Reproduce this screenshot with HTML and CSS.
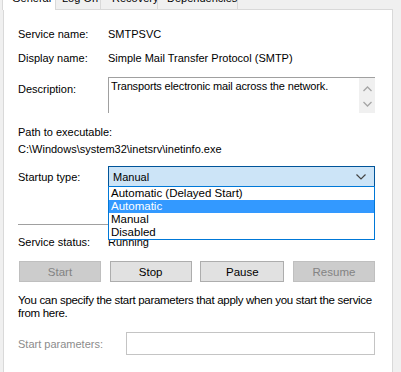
FILE: index.html
```html
<!DOCTYPE html>
<html lang="en">
<head>
    <meta charset="UTF-8">
    <title>SMTPSVC Properties</title>
    <link rel="stylesheet" href="styles.css">
</head>
<body>
    <div class="tabs">
        <div class="tab tab-general active">General</div>
        <div class="tab tab-logon">Log On</div>
        <div class="tab tab-recovery">Recovery</div>
        <div class="tab tab-deps">Dependencies</div>
    </div>
    <div class="panel">
        <div class="row row-first">
            <span class="label">Service name:</span>
            <span class="value">SMTPSVC</span>
        </div>
        <div class="row row-display">
            <span class="label">Display name:</span>
            <span class="value">Simple Mail Transfer Protocol (SMTP)</span>
        </div>
        <div class="row row-desc">
            <span class="label label-desc">Description:</span>
            <div class="desc-box">
                <div class="desc-text">Transports electronic mail across the network.</div>
                <div class="scrollbar">
                    <svg width="9" height="6" viewBox="0 0 9 6"><path d="M0.5 5 L4.5 1 L8.5 5" fill="none" stroke="#a6a6a6" stroke-width="1.3"/></svg>
                    <svg width="9" height="6" viewBox="0 0 9 6"><path d="M0.5 1 L4.5 5 L8.5 1" fill="none" stroke="#a6a6a6" stroke-width="1.3"/></svg>
                </div>
            </div>
        </div>
        <div class="path">
            <div>Path to executable:</div>
            <div>C:\Windows\system32\inetsrv\inetinfo.exe</div>
        </div>
        <div class="row row-startup">
            <span class="label">Startup type:</span>
            <div class="combo-wrap">
                <div class="combo">
                    <span>Manual</span>
                    <svg width="10" height="6" viewBox="0 0 10 6"><path d="M0.5 0.5 L5 5 L9.5 0.5" fill="none" stroke="#444" stroke-width="1.2"/></svg>
                </div>
                <div class="dropdown">
                    <div class="option">Automatic (Delayed Start)</div>
                    <div class="option selected">Automatic</div>
                    <div class="option">Manual</div>
                    <div class="option">Disabled</div>
                </div>
            </div>
        </div>
        <div class="separator"></div>
        <div class="row row-status">
            <span class="label">Service status:</span>
            <span class="value">Running</span>
        </div>
        <div class="buttons">
            <button class="btn" disabled>Start</button>
            <button class="btn">Stop</button>
            <button class="btn btn-wide">Pause</button>
            <button class="btn" disabled>Resume</button>
        </div>
        <p class="hint">You can specify the start parameters that apply when you start the service from here.</p>
        <div class="row row-params">
            <span class="label label-params">Start parameters:</span>
            <div class="params-input"></div>
        </div>
    </div>
</body>
</html>
```

FILE: styles.css
```css
body {
    margin: 0;
    width: 401px;
    height: 372px;
    overflow: hidden;
    background-color: #f0f0f0;
    font-family: "Liberation Sans", Arial, sans-serif;
    font-size: 11px;
    color: #000;
}
.tabs {
    display: flex;
    align-items: flex-end;
    margin-top: -12px;
    margin-left: 2px;
    height: 21px;
}
.tab {
    box-sizing: border-box;
    height: 20px;
    padding: 1px 0 0 8px;
    line-height: 14px;
    background-color: #f0f0f0;
    border: 1px solid #d9d9d9;
    border-bottom: none;
    margin-left: -1px;
}
.tab.active {
    height: 21px;
    margin-left: 0;
    background-color: #fff;
    position: relative;
    z-index: 1;
    margin-bottom: -1px;
    padding-left: 9px;
}
.tab-general { width: 54px; }
.tab-logon { width: 46px; padding-left: 6px; }
.tab-recovery { width: 58px; padding-left: 11px; }
.tab-deps { width: 81px; padding-left: 9px; }
.panel {
    box-sizing: border-box;
    margin-left: 3px;
    width: 390px;
    height: 380px;
    background-color: #fff;
    border: 1px solid #d9d9d9;
    padding: 17px 17px 0 14px;
}
.row {
    display: flex;
    line-height: 14px;
}
.label {
    width: 90px;
    flex-shrink: 0;
}
.row-display {
    margin-top: 10px;
}
.row-desc {
    margin-top: 12px;
    align-items: flex-start;
}
.label-desc {
    padding-top: 5px;
}
.desc-box {
    flex: 1;
    display: flex;
    height: 35px;
    border-top: 1px solid #a0a0a0;
    border-left: 1px solid #a0a0a0;
}
.desc-text {
    flex: 1;
    padding: 1px 0 0 2px;
    letter-spacing: -0.15px;
}
.scrollbar {
    width: 16px;
    background-color: #f0f0f0;
    display: flex;
    flex-direction: column;
    align-items: center;
    justify-content: space-around;
    padding: 4px 0 2px;
    box-sizing: border-box;
}
.path {
    margin-top: 11px;
    line-height: 17px;
}
.row-startup {
    margin-top: 8px;
    align-items: center;
}
.combo-wrap {
    flex: 1;
    position: relative;
}
.combo {
    box-sizing: border-box;
    height: 21px;
    display: flex;
    align-items: center;
    justify-content: space-between;
    padding: 0 8px 0 4px;
    background-color: #cce4f7;
    border: 1px solid #005499;
}
.dropdown {
    position: absolute;
    top: 20px;
    left: 0;
    right: 0;
    background-color: #fff;
    border: 1px solid #0078d7;
    z-index: 2;
}
.option {
    height: 13px;
    line-height: 13px;
    padding-left: 2px;
    font-size: 11.5px;
}
.option.selected {
    background-color: #3399ff;
    color: #fff;
}
.separator {
    margin-top: 37px;
    height: 1px;
    background-color: #a0a0a0;
    border-bottom: 1px solid #fff;
}
.row-status {
    margin-top: 9px;
}
.buttons {
    display: flex;
    justify-content: space-between;
    margin: 12px 0 0 1px;
}
.btn {
    box-sizing: border-box;
    width: 82px;
    height: 21px;
    padding: 0;
    font-family: inherit;
    font-size: 11.5px;
    color: #000;
    background-color: #e1e1e1;
    border: 1px solid #adadad;
}
.btn-wide {
    width: 84px;
}
.btn:disabled {
    color: #838383;
    background-color: #cccccc;
    border-color: #bfbfbf;
}
.hint {
    margin: 12px 0 0;
    line-height: 13px;
    font-size: 11.5px;
    letter-spacing: -0.3px;
}
.row-params {
    margin-top: 12px;
    align-items: center;
}
.label-params {
    width: 108px;
    color: #8c8c8c;
}
.params-input {
    flex: 1;
    height: 23px;
    box-sizing: border-box;
    border: 1px solid #c4c4c4;
}
```
